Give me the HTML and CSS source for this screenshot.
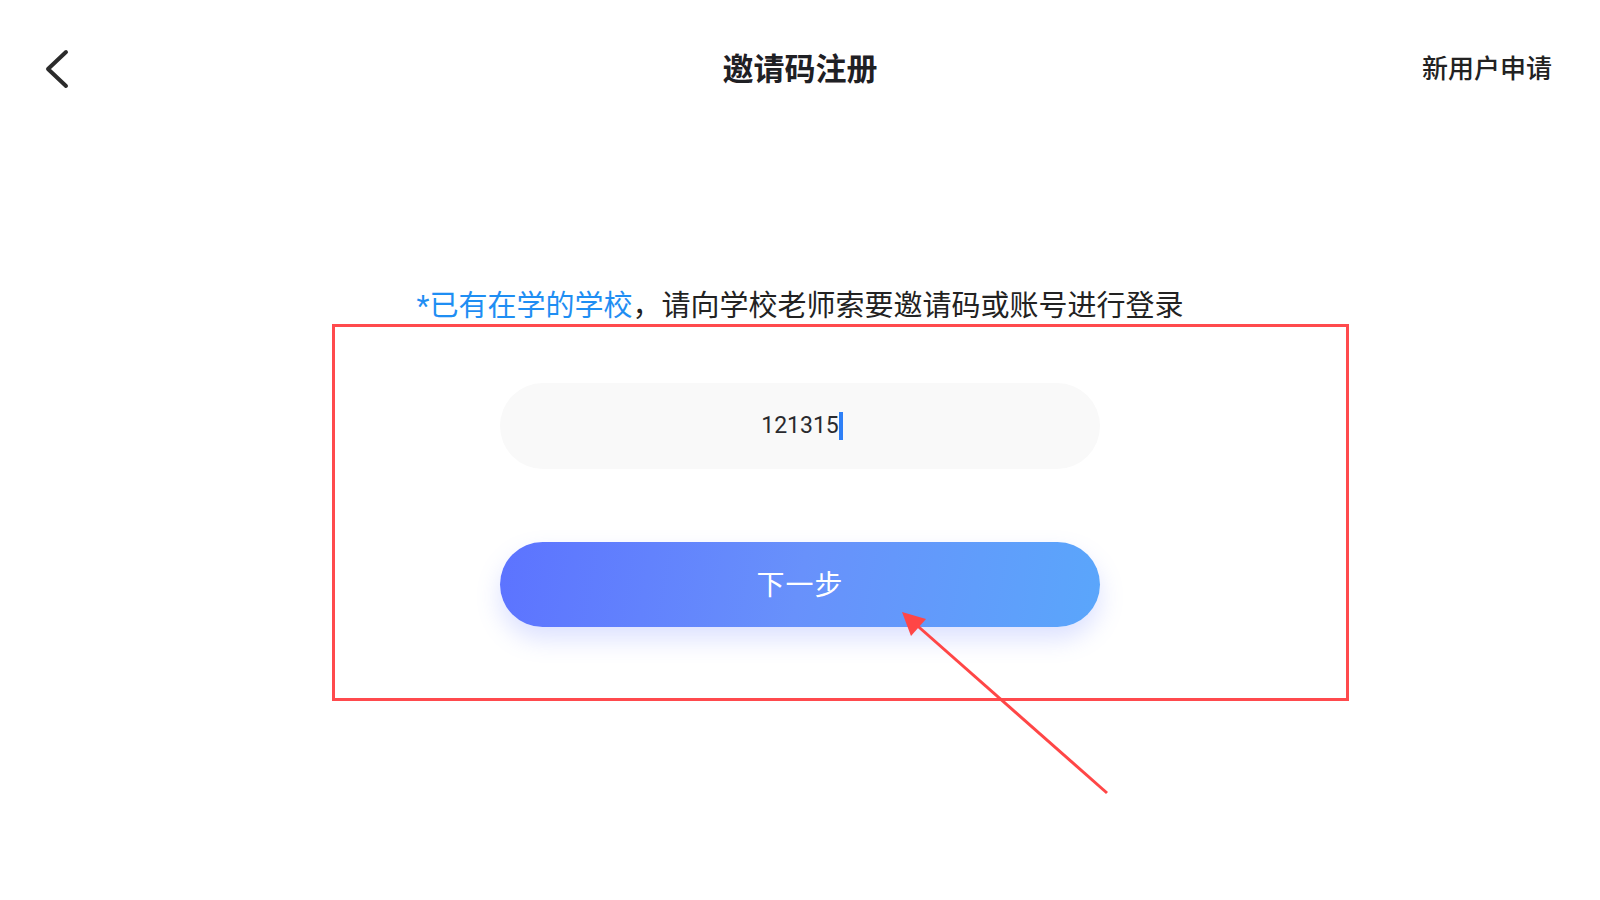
FILE: index.html
```html
<!DOCTYPE html>
<html lang="zh-CN">
<head>
<meta charset="UTF-8">
<title>邀请码注册</title>
<link rel="stylesheet" href="styles.css">
</head>
<body>
<div class="page">
  <header class="topbar">
    <a class="back" href="#" aria-label="返回">
      <svg width="24" height="40" viewBox="0 0 24 40"><path d="M21 3 L3 20 L21 37" fill="none" stroke="#2b2b2b" stroke-width="4" stroke-linecap="round" stroke-linejoin="round"/></svg>
    </a>
    <h1 class="title">邀请码注册</h1>
    <a class="apply" href="#">新用户申请</a>
  </header>

  <main class="content">
    <p class="hint"><span class="hint-blue"><span class="star">*</span>已有在学的学校</span>，请向学校老师索要邀请码或账号进行登录</p>
    <div class="code-field"><span class="code-value">121315</span><span class="caret"></span></div>
    <button class="next-btn" type="button">下一步</button>
  </main>

  <div class="mark-box"></div>
  <svg class="mark-arrow" width="1600" height="900" viewBox="0 0 1600 900">
    <line x1="1107" y1="793" x2="912" y2="621" stroke="#ff4646" stroke-width="3"/>
    <polygon points="902,612 926,619 911,636" fill="#ff4646"/>
  </svg>
</div>
</body>
</html>
```

FILE: styles.css
```css
body{margin:0;background:#fff;font-family:"Noto Sans CJK SC","Noto Sans",sans-serif;color:#222}
.page{position:relative;width:1600px;height:900px;overflow:hidden}
.topbar{height:136px;display:flex;align-items:center;justify-content:space-between;padding:0 48px 0 45px;position:relative}
.back{display:flex;align-items:center;width:24px;height:40px;margin-top:2px}
.title{position:absolute;left:0;right:0;text-align:center;margin:0;font-size:31px;font-weight:700;color:#1f2024;line-height:40px;pointer-events:none;margin-top:-2px}
.apply{font-size:26px;font-weight:500;color:#222;text-decoration:none;line-height:36px;margin-top:-2px}
.content{display:flex;flex-direction:column;align-items:center;padding-top:147px}
.hint{margin:0;font-size:29px;line-height:40px;color:#222}
.hint-blue{color:#1f8ef3}
.star{font-family:Roboto,"Noto Sans",sans-serif;font-size:30px}
.code-field{margin-top:57px;width:600px;height:86px;border-radius:43px;background:#f9f9f9;display:flex;align-items:center;justify-content:center;font-family:Roboto,"Noto Sans",sans-serif;font-size:23px;color:#2a2a2e;padding-left:4px;box-sizing:border-box}
.code-value{line-height:30px}
.caret{width:4px;height:28px;background:#2f80f7}
.next-btn{margin-top:73px;width:600px;height:85px;border:0;border-radius:43px;background:linear-gradient(100deg,#5c73ff 0%,#6891fb 50%,#5aa6fb 100%);box-shadow:0 12px 24px rgba(96,120,255,.22);color:#fff;font-family:"Noto Sans CJK SC","Noto Sans",sans-serif;font-size:28px;line-height:36px;letter-spacing:1px;padding:0 0 4px;cursor:pointer}
.mark-box{position:absolute;left:332px;top:324px;width:1017px;height:377px;box-sizing:border-box;border:3px solid #ff4a4d;pointer-events:none}
.mark-arrow{position:absolute;left:0;top:0;pointer-events:none}
```
